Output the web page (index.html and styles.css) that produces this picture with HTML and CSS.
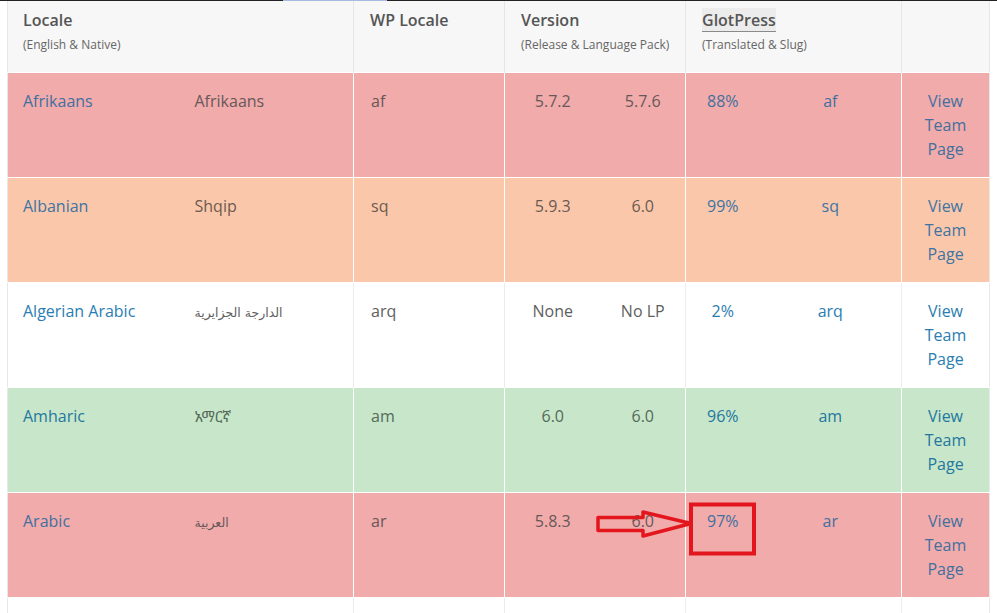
FILE: index.html
```html
<!DOCTYPE html>
<html lang="en">
<head>
<meta charset="utf-8">
<title>Locales</title>
<link rel="stylesheet" href="styles.css">
</head>
<body>
<div class="page">
  <div class="topline"></div>
  <div class="wrap">
    <table class="locales">
      <colgroup>
        <col class="c-en"><col class="c-native"><col class="c-wp"><col class="c-rel"><col class="c-lp"><col class="c-pct"><col class="c-slug"><col class="c-link">
      </colgroup>
      <thead>
        <tr>
          <th colspan="2" class="grp first"><span class="h-title">Locale</span><span class="h-sub">(English &amp; Native)</span></th>
          <th class="grp"><span class="h-title">WP Locale</span><span class="h-sub">&nbsp;</span></th>
          <th colspan="2" class="grp"><span class="h-title">Version</span><span class="h-sub">(Release &amp; Language Pack)</span></th>
          <th colspan="2" class="grp"><span class="h-title"><abbr class="abbr">GlotPress</abbr></span><span class="h-sub">(Translated &amp; Slug)</span></th>
          <th class="last"></th>
        </tr>
      </thead>
      <tbody>
        <tr class="r-pink">
          <td class="en"><a href="#">Afrikaans</a></td>
          <td class="native grp">Afrikaans</td>
          <td class="wp grp">af</td>
          <td class="ctr">5.7.2</td>
          <td class="ctr grp">5.7.6</td>
          <td class="ctr"><a href="#">88%</a></td>
          <td class="ctr grp"><a href="#">af</a></td>
          <td class="ctr link"><a href="#">View Team Page</a></td>
        </tr>
        <tr class="r-orange">
          <td class="en"><a href="#">Albanian</a></td>
          <td class="native grp">Shqip</td>
          <td class="wp grp">sq</td>
          <td class="ctr">5.9.3</td>
          <td class="ctr grp">6.0</td>
          <td class="ctr"><a href="#">99%</a></td>
          <td class="ctr grp"><a href="#">sq</a></td>
          <td class="ctr link"><a href="#">View Team Page</a></td>
        </tr>
        <tr class="r-white">
          <td class="en"><a href="#">Algerian Arabic</a></td>
          <td class="native grp"><span class="ar" dir="rtl">الدارجة الجزايرية</span></td>
          <td class="wp grp">arq</td>
          <td class="ctr">None</td>
          <td class="ctr grp">No LP</td>
          <td class="ctr"><a href="#">2%</a></td>
          <td class="ctr grp"><a href="#">arq</a></td>
          <td class="ctr link"><a href="#">View Team Page</a></td>
        </tr>
        <tr class="r-green">
          <td class="en"><a href="#">Amharic</a></td>
          <td class="native grp"><span class="et">አማርኛ</span></td>
          <td class="wp grp">am</td>
          <td class="ctr">6.0</td>
          <td class="ctr grp">6.0</td>
          <td class="ctr"><a href="#">96%</a></td>
          <td class="ctr grp"><a href="#">am</a></td>
          <td class="ctr link"><a href="#">View Team Page</a></td>
        </tr>
        <tr class="r-pink">
          <td class="en"><a href="#">Arabic</a></td>
          <td class="native grp"><span class="ar" dir="rtl">العربية</span></td>
          <td class="wp grp">ar</td>
          <td class="ctr">5.8.3</td>
          <td class="ctr grp">6.0</td>
          <td class="ctr"><a href="#">97%</a></td>
          <td class="ctr grp"><a href="#">ar</a></td>
          <td class="ctr link"><a href="#">View Team Page</a></td>
        </tr>
        <tr class="r-white">
          <td class="en"></td>
          <td class="native grp"></td>
          <td class="wp grp"></td>
          <td class="ctr"></td>
          <td class="ctr grp"></td>
          <td class="ctr"></td>
          <td class="ctr grp"></td>
          <td class="ctr link"></td>
        </tr>
      </tbody>
    </table>
  </div>
  <svg class="annot" width="997" height="613" viewBox="0 0 997 613" aria-hidden="true">
    <polygon points="598,517.5 643,517.5 643,512 691,523.5 643,536 643,530.5 598,530.5" fill="none" stroke="#e3161e" stroke-width="3.5" stroke-linejoin="round"/>
    <rect x="691" y="504.5" width="63" height="49" fill="none" stroke="#e3161e" stroke-width="4"/>
  </svg>
</div>
</body>
</html>
```

FILE: styles.css
```css
html, body {
  margin: 0;
  padding: 0;
  background: #fff;
}
body {
  font-family: "Open Sans", "Noto Sans", "DejaVu Sans", sans-serif;
  font-size: 16px;
  line-height: 24px;
  color: #555;
}
.page {
  position: relative;
  width: 997px;
  height: 613px;
  overflow: hidden;
}
.topline {
  height: 1px;
  background: linear-gradient(to right, #222 283px, #aab9e2 283px, #aab9e2 387px, #222 387px);
}
.wrap {
  padding-left: 7px;
}
.locales {
  width: 982px;
  table-layout: fixed;
  border-collapse: collapse;
  border-left: 1px solid #e8e8e8;
  border-right: 1px solid #e8e8e8;
}
.c-en { width: 187px; }
.c-native { width: 159px; }
.c-wp { width: 151px; }
.c-rel { width: 96px; }
.c-lp { width: 85px; }
.c-pct { width: 74px; }
.c-slug { width: 142px; }
.c-link { width: 88px; }

.locales th {
  background: #f7f7f7;
  text-align: left;
  vertical-align: top;
  padding: 7px 0 15px 16px;
  height: 49px;
  font-weight: 600;
  border-right: 1px solid #e6e6e6;
}
.locales th.first { padding-left: 15px; }
.locales th.last { border-right: 0; }
.h-title {
  display: block;
  font-size: 16px;
  line-height: 24px;
  color: #555;
}
.h-sub {
  display: block;
  margin-top: 3px;
  font-size: 12px;
  line-height: 20px;
  font-weight: 400;
  color: #666;
}
.abbr {
  text-decoration: none;
  background: #ececec;
  border-bottom: 1px solid #8a8a8a;
  padding: 1px 0 0;
}

.locales td {
  vertical-align: top;
  padding: 16px 0;
  height: 72px;
  border-top: 1px solid #fff;
}
.locales td.grp { border-right: 1px solid #fff; }
.locales td.en { padding-left: 15px; }
.locales td.wp { padding-left: 17px; }
.locales td.ctr { text-align: center; }
.locales td.link { padding: 16px 12px; }
.locales a { text-decoration: none; }

.ar {
  font-family: "DejaVu Sans", sans-serif;
  font-size: 12.5px;
  unicode-bidi: isolate;
}
.et {
  font-family: "Noto Sans Ethiopic", "Abyssinica SIL", "DejaVu Sans", "FreeSerif", sans-serif;
  font-size: 15px;
}

.r-pink td { background: #f1abab; color: #675858; }
.r-pink a { color: #41709f; }
.r-orange td { background: #fbc7aa; color: #6b5a50; }
.r-orange a { color: #3d74a4; }
.r-green td { background: #c8e6c9; color: #556a5a; }
.r-green a { color: #22789f; }
.r-white td { background: #fff; color: #5e5e5e; }
.r-white td.grp { border-right-color: #ececec; }
.r-white a { color: #2a7db2; }

.annot {
  position: absolute;
  left: 0;
  top: 0;
  pointer-events: none;
}
```
